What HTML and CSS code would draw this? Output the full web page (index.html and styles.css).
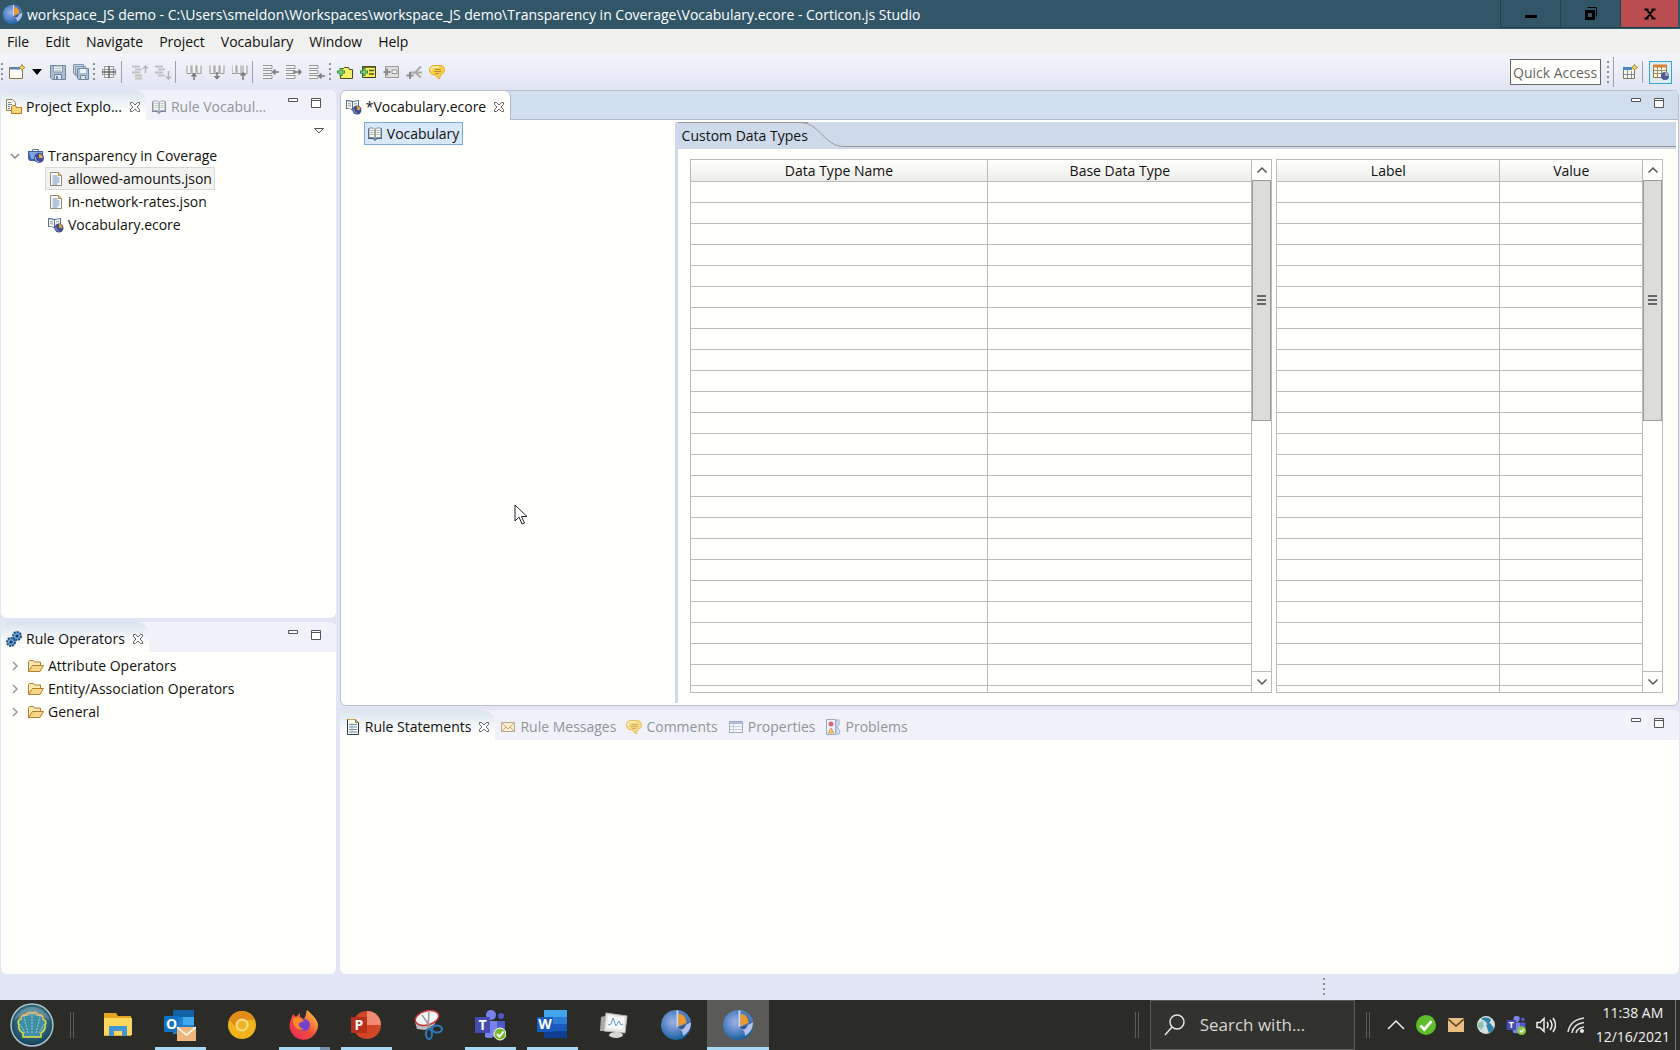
FILE: index.html
```html
<!DOCTYPE html>
<html lang="en">
<head>
  <meta charset="UTF-8">
  <meta name="viewport" content="width=device-width, initial-scale=1.0">
  <title>Corticon.js Studio</title>

  <link rel="stylesheet" href="styles.css">
</head>
<body>
  <!-- icon sprite -->
  <svg class="sprite">
    <defs>
      <radialGradient id="ball" cx="0.4" cy="0.4" r="0.65">
        <stop offset="0" stop-color="#9db4e4"/>
        <stop offset="0.5" stop-color="#5b86c8"/>
        <stop offset="1" stop-color="#0d5c9a"/>
      </radialGradient>
      <radialGradient id="shell-bg" cx="0.5" cy="0.4" r="0.6">
        <stop offset="0" stop-color="#5fa3b0"/>
        <stop offset="1" stop-color="#123e57"/>
      </radialGradient>
      <linearGradient id="fox" x1="0" y1="1" x2="1" y2="0">
        <stop offset="0" stop-color="#e8205c"/>
        <stop offset="0.5" stop-color="#f4513a"/>
        <stop offset="1" stop-color="#ffdb43"/>
      </linearGradient>
    </defs>
    <symbol id="app" viewBox="0 0 32 32">
      <circle cx="16" cy="16" r="15" fill="url(#ball)"/>
      <path d="M17 1v17l2-1V4c5 1 8 4 9 9l3-1C29 5 23 1 17 1z" fill="#4d7dbd"/>
      <path d="M16.500 1l2 1v15l-2 2z" fill="#cfd9f0"/>
      <path d="M18.500 5c5 0 8 4 8 9l-8 3z" fill="#f0982a"/>
      <path d="M16.500 19c6-1 10-3 14.500-6 0 7-3 11-8 14 0-5-2-7-6.500-8z" fill="#b4c2ea"/>
      <path d="M17 18.500l9-3c-1 3-3 5-5 5z" fill="#35588e"/>
    </symbol>
    <symbol id="book" viewBox="0 0 16 16">
      <path d="M1 2.500h2v9.500h4l1 2 1-2h4V2.500h2V13h-5l-2 2-2-2H1z" fill="#3c587f"/>
      <path d="M2 2.500c2-1 4-1 6 1v9.500c-2-2-4-2-6-1zM14 2.500c-2-1-4-1-6 1v9.500c2-2 4-2 6-1z" fill="#fbf8e6" stroke="#76869c"/>
      <path d="M3.500 4.500h3M3.500 6.500h3M3.500 8.500h3M9.500 4.500h3M9.500 6.500h3M9.500 8.500h3" stroke="#a3b0b5" fill="none"/>
    </symbol>
    <symbol id="ecore" viewBox="0 0 16 16">
      <path d="M0 1h2l5 1 6-1v8l-6 3-3-2H0z" fill="#536f98"/>
      <path d="M1 2l5 1v7L1 9zM12 2L7 3v7l5-1z" fill="#f7f5e4"/>
      <path d="M2 4.500l3 .5M2 6.500l3 .5M8 5l3-.5" stroke="#8799a8" fill="none"/>
      <circle cx="11" cy="11" r="4.500" fill="#41508f"/>
      <path d="M11 7c2 0 3 1 3.500 4H11z" fill="#e89a3c"/>
      <path d="M8 10a3 3 0 0 0 3 4" stroke="#8fa2da" fill="none"/>
    </symbol>
    <symbol id="project" viewBox="0 0 16 16">
      <path d="M0 3h15v10H2L0 11z" fill="#3b62ae"/>
      <path d="M1 4h13v7H3z" fill="#7fa3dc"/>
      <path d="M4.500 3V1.500h6V3" fill="none" stroke="#6c7c92"/>
      <circle cx="11" cy="10" r="5" fill="#3c4d93"/>
      <path d="M11 6c2 0 3 1 4 4h-4z" fill="#efa84a"/>
      <path d="M7.500 9a4 4 0 0 0 4 5" stroke="#b7c3e8" fill="none"/>
    </symbol>
    <symbol id="explorer" viewBox="0 0 16 16">
      <path d="M.5.500h6l3 3v8h-9z" fill="#f4f5ee" stroke="#98834f"/>
      <path d="M2 3.500h3M2 5.500h4M2 7.500h2M2 9.500h2" stroke="#6d88ad"/>
      <path d="M5.500 14.500v-7l1-1h3l1 2h5v6z" fill="#f9d876" stroke="#b07a24"/>
    </symbol>
    <symbol id="file" viewBox="0 0 16 16">
      <path d="M2.500 1.500h8l3 3v10h-11z" fill="#fbfcf8" stroke="#8d8b74"/>
      <path d="M10.500 1.500v3h3" fill="#e7c578" stroke="#b69145"/>
      <path d="M4.500 5h5M4.500 7h7M4.500 9h7M4.500 11h7M4.500 13h5" stroke="#6f8fbe"/>
    </symbol>
    <symbol id="statements" viewBox="0 0 16 16">
      <path d="M2.500.500h8l3 3v12h-11z" fill="#fbfcee" stroke="#2f3d4c"/>
      <path d="M10.500.500v3h3" fill="#e0d182" stroke="#94803a"/>
      <path d="M4 5.500h8M4 8h8M4 10.500h8M4 13h8" stroke="#6b8cb4"/>
      <path d="M7 4v10" stroke="#9db3ce"/>
      <path d="M3 .5h7" stroke="#d6a93c"/>
    </symbol>
    <symbol id="folder" viewBox="0 0 16 16">
      <path d="M.5 13.500v-10l1-1h4l1 1.500h6v3" fill="#fbe9b0" stroke="#b47f2f"/>
      <path d="M.5 13.500l4-6h11l-3.500 6z" fill="#f7d687" stroke="#b47f2f"/>
    </symbol>
    <symbol id="gears" viewBox="0 0 16 16">
      <circle cx="5" cy="11" r="4" fill="#6ea3d2" stroke="#1d4f80" stroke-width="2" stroke-dasharray="2 1"/>
      <circle cx="11" cy="5" r="4" fill="#6ea3d2" stroke="#1d4f80" stroke-width="2" stroke-dasharray="2 1"/>
      <circle cx="5" cy="11" r="1.500" fill="#163a60"/>
      <circle cx="11" cy="5" r="1.500" fill="#163a60"/>
    </symbol>
    <symbol id="close" viewBox="0 0 12 12">
      <path d="M1.500 1.500h2L6 4l2.500-2.500h2v2L8 6l2.500 2.500v2h-2L6 8l-2.500 2.500h-2v-2L4 6 1.500 3.500z" fill="#fff" stroke="#666"/>
    </symbol>
    <symbol id="min" viewBox="0 0 12 12">
      <path d="M1.500 1.500h9v3h-9z" fill="#fff" stroke="#555"/>
    </symbol>
    <symbol id="max" viewBox="0 0 12 12">
      <path d="M1.500 1.500h9v9h-9zM1.500 3.500h9" fill="#fff" stroke="#555"/>
    </symbol>
    <symbol id="up" viewBox="0 0 12 12"><path d="M1.500 8.500L6 4l4.500 4.500" fill="none" stroke="#555" stroke-width="1.500"/></symbol>
    <symbol id="down" viewBox="0 0 12 12"><path d="M1.500 3.500L6 8l4.500-4.500" fill="none" stroke="#555" stroke-width="1.500"/></symbol>
    <symbol id="twist-open" viewBox="0 0 10 10"><path d="M1 3l4 4 4-4" fill="none" stroke="#888" stroke-width="1.500"/></symbol>
    <symbol id="twist" viewBox="0 0 10 10"><path d="M3 1l4 4-4 4" fill="none" stroke="#999" stroke-width="1.500"/></symbol>
    <symbol id="mail" viewBox="0 0 16 16">
      <path d="M1.500 3.500h13v9h-13z" fill="#fdeebf" stroke="#a08a66"/>
      <path d="M2 4l6 6 6-6M2 12l4-4M14 12l-4-4" fill="none" stroke="#c08f4c"/>
    </symbol>
    <symbol id="comment" viewBox="0 0 16 16">
      <path d="M5 1.500h6c3 0 4.500 2 4.500 5 0 2-2 3.500-4 4l-1 4.500c-2-1-3-2-4-4-4 0-6-2-6-5s2-4.500 4.500-4.500z" fill="#f8cf45" stroke="#e5ac2b"/>
      <path d="M2 7c0-3 1-4 4-4h4" stroke="#fdf2b2" fill="none" stroke-width="1.500"/>
      <path d="M6 5.500h6M5 7.500h7M6 9.500h4" stroke="#c0892a"/>
    </symbol>
    <symbol id="props" viewBox="0 0 16 16">
      <path d="M1.500 2.500h13v11h-13z" fill="#f6f8fb" stroke="#7b91b5"/>
      <path d="M2 4h12" stroke="#8ea9d3" stroke-width="2"/>
      <path d="M5.500 5v8M2 7.500h12M2 10.500h12" stroke="#b7c2d4"/>
    </symbol>
    <symbol id="problems" viewBox="0 0 16 16">
      <path d="M1.500.500h9v15h-9z" fill="#eef1fa" stroke="#7c88ae"/>
      <path d="M11 1h3v5l-2 2 3 4-1 3h-3z" fill="#ccd6ef" stroke="#7c98c6"/>
      <circle cx="6" cy="5" r="2.500" fill="#c9304c"/>
      <path d="M6 9l3 5H3z" fill="#f2b44a" stroke="#c78324"/>
    </symbol>
    <symbol id="new" viewBox="0 0 16 16">
      <path d="M.5 3.500h13v11H.5z" fill="#fbfcf8" stroke="#8b7440"/>
      <path d="M1 4.500h10" stroke="#4b87c5" stroke-width="2"/>
      <path d="M13 .5l1 2 2 1-2 1-1 2-1-2-2-1 2-1z" fill="#fbe27a" stroke="#a68423"/>
    </symbol>
    <symbol id="save" viewBox="0 0 16 16">
      <path d="M.5 1.500h15v14h-13l-2-2z" fill="#a9bdd4" stroke="#71849c"/>
      <path d="M3.500 2h9v6h-9z" fill="#eef2f6" stroke="#8b9cb0"/>
      <path d="M5 4.500h6M5 6.500h6" stroke="#b8c4d0"/>
      <path d="M4.500 10.500h7v5h-7z" fill="#dfe6ed" stroke="#71849c"/>
      <path d="M6 12h2v3H6z" fill="#71849c"/>
    </symbol>
    <symbol id="save-all" viewBox="0 0 16 16">
      <path d="M.5.500h10v10H2l-1.500-1zM2.500 2.500h10v10H4l-1.500-1z" fill="#c8d4e2" stroke="#8294aa"/>
      <path d="M4.500 4.500h11v11h-10l-1-1z" fill="#a9bdd4" stroke="#71849c"/>
      <path d="M7 5h6v4H7z" fill="#eef2f6"/>
      <path d="M7.500 11.500h5v4h-5z" fill="#dfe6ed" stroke="#71849c"/>
    </symbol>
    <symbol id="grid" viewBox="0 0 16 16">
      <path d="M3.500 2.500h9v11h-9zM1.500 5.500h13v5h-13z" fill="#f4f4f4" stroke="#999"/>
      <path d="M8 2v12M1 8h14" stroke="#666" stroke-width="1.500"/>
    </symbol>
    <symbol id="sort-up" viewBox="0 0 16 16">
      <path d="M0 2.500h8M3 5.500h7M0 8.500h8M3 11.500h7M3 14.500h7" stroke="#c2c2c2" stroke-width="2"/>
      <path d="M13.500 9V2M11 4.500L13.500 2 16 4.500" fill="none" stroke="#b5b5b5" stroke-width="1.500"/>
    </symbol>
    <symbol id="sort-down" viewBox="0 0 16 16">
      <path d="M0 2.500h8M3 5.500h7M0 8.500h8M3 11.500h7" stroke="#c2c2c2" stroke-width="2"/>
      <path d="M13.500 7v8M11 12.500l2.500 2.500 2.500-2.500" fill="none" stroke="#b5b5b5" stroke-width="1.500"/>
    </symbol>
    <symbol id="col-up" viewBox="0 0 16 16">
      <path d="M1 1.500v8h4v-8M6 1.500v8h4v-8M11 1.500v8h4v-8" fill="#f2f2f2" stroke="#999"/>
      <path d="M8 16v-6M5.500 12.500L8 10l2.500 2.500" fill="none" stroke="#777" stroke-width="1.500"/>
    </symbol>
    <symbol id="col-down" viewBox="0 0 16 16">
      <path d="M1 1.500v8h4v-8M6 1.500v8h4v-8M11 1.500v8h4v-8" fill="#f2f2f2" stroke="#999"/>
      <path d="M8 8v7M5.500 12L8 14.500l2.500-2.500" fill="none" stroke="#777" stroke-width="1.500"/>
    </symbol>
    <symbol id="col-add" viewBox="0 0 16 16">
      <path d="M0 1.500v8h4v-8M5 1.500v8h4v-8M11 1.500v8h4v-8" fill="#f2f2f2" stroke="#999"/>
      <path d="M11 16v-7M8.500 11.500L11 9l2.500 2.500" fill="none" stroke="#777" stroke-width="1.500"/>
    </symbol>
    <symbol id="row-left" viewBox="0 0 16 16">
      <path d="M0 1.500h9v3H0M0 6.500h9v3H0M0 11.500h9v3H0" fill="#f2f2f2" stroke="#999"/>
      <path d="M16 8h-6M12.500 5.500L10 8l2.500 2.500" fill="none" stroke="#777" stroke-width="1.500"/>
    </symbol>
    <symbol id="row-right" viewBox="0 0 16 16">
      <path d="M0 1.500h9v3H0M0 6.500h9v3H0M0 11.500h9v3H0" fill="#f2f2f2" stroke="#999"/>
      <path d="M7 8h8M12.500 5.500L15 8l-2.500 2.500" fill="none" stroke="#777" stroke-width="1.500"/>
    </symbol>
    <symbol id="row-add" viewBox="0 0 16 16">
      <path d="M0 1.500h9v3H0M0 6.500h9v3H0M0 11.500h9v3H0" fill="#f2f2f2" stroke="#999"/>
      <path d="M16 12h-6M12.500 9.500L10 12l2.500 2.500" fill="none" stroke="#777" stroke-width="1.500"/>
    </symbol>
    <symbol id="entity-add" viewBox="0 0 16 16">
      <path d="M3.500 4.500h3l1-1h4l1 2h3v9h-12z" fill="#f6ef6a" stroke="#4c4a16"/>
      <path d="M4 4v8M0 8h8" stroke="#2d8a35" stroke-width="3"/>
      <path d="M4 5v6M1 8h6" stroke="#a8e29a"/>
    </symbol>
    <symbol id="attr-add" viewBox="0 0 16 16">
      <path d="M2.500 2.500h13v11h-13z" fill="#f3ec5e" stroke="#3f3d16"/>
      <path d="M3 3h12" stroke="#55521c" stroke-width="1.500"/>
      <path d="M9 6.500h5M9 10h5" stroke="#55521c" stroke-width="1.500"/>
      <path d="M4 4v8M0 8h8" stroke="#2d8a35" stroke-width="3"/>
      <path d="M4 5v6M1 8h6" stroke="#a8e29a"/>
    </symbol>
    <symbol id="attr-off" viewBox="0 0 16 16">
      <path d="M2.500 2.500h13v11h-13z" fill="#dedede" stroke="#999"/>
      <path d="M9 6h5v3.500H9z" fill="#f2f2f2" stroke="#999"/>
      <path d="M4 4.500v7M.5 8h7" stroke="#8c8c8c" stroke-width="2"/>
    </symbol>
    <symbol id="assoc" viewBox="0 0 16 16">
      <path d="M4 8.500h5l6-6M9 8.500l6 5M9 8.500h7" fill="none" stroke="#aaa" stroke-width="2"/>
      <path d="M4 8v7M.5 11.500h7" stroke="#8c8c8c" stroke-width="2"/>
    </symbol>
    <symbol id="open-persp" viewBox="0 0 16 16">
      <path d="M1.500 3.500h11v11h-11z" fill="#f8f7e4" stroke="#777a6c"/>
      <path d="M1 4.500h9" stroke="#4b87c5" stroke-width="3"/>
      <path d="M5.500 5v9M9.500 7v7M2 10.500h10" stroke="#7c93a8"/>
      <path d="M12.500.500l1 2 2 1-2 1-1 2-1-2-2-1 2-1z" fill="#fbe27a" stroke="#a68423"/>
    </symbol>
    <symbol id="persp" viewBox="0 0 16 16">
      <path d="M.5 1.500h13v12H.5z" fill="#fdfbe8" stroke="#8b7750"/>
      <path d="M0 2h14" stroke="#dd8230" stroke-width="3"/>
      <path d="M4.500 3v10M8.500 3v10M1 6.500h12M1 9.500h12" stroke="#9a8f70"/>
      <circle cx="12" cy="12" r="4" fill="#4a5896"/>
      <path d="M12 8c2 0 3 1 4 4h-4z" fill="#a9a3c2"/>
    </symbol>
    <symbol id="check" viewBox="0 0 18 18">
      <circle cx="9" cy="9" r="9" fill="#5fbd2a"/>
      <path d="M4 9.500l3.500 3.500L14 5.500" fill="none" stroke="#fff" stroke-width="2.500"/>
    </symbol>
  </svg>

  <header class="title-bar">
    <svg class="title-icon"><use href="#app"/></svg>
    <h1 class="title-text">workspace_JS demo - C:\Users\smeldon\Workspaces\workspace_JS demo\Transparency in Coverage\Vocabulary.ecore - Corticon.js Studio</h1>
    <div class="window-buttons">
      <button aria-label="Minimize"><svg width="14" height="14"><path d="M1 8h12v3H1z"/></svg></button>
      <button aria-label="Restore"><svg width="14" height="14"><path d="M3.500.500h9v9" fill="none" stroke="#000"/><path d="M2.500 4.500h7v7h-7z" fill="none" stroke="#000" stroke-width="3"/></svg></button>
      <button class="quit" aria-label="Close"><svg width="14" height="14"><path d="M1.500 2.500h4M8.500 2.500h4M1.500 11.500h4M8.500 11.500h4M4 3l6 8M10 3l-6 8" fill="none" stroke="#000" stroke-width="2"/></svg></button>
    </div>
  </header>

  <nav class="menu-bar">
    <button>File</button>
    <button>Edit</button>
    <button>Navigate</button>
    <button>Project</button>
    <button>Vocabulary</button>
    <button>Window</button>
    <button>Help</button>
  </nav>

  <div class="tool-bar">
    <span class="grip"></span>
    <button aria-label="New"><svg><use href="#new"/></svg></button>
    <button class="drop" aria-label="New menu"><svg><path d="M3 5h10l-5 6z"/></svg></button>
    <button aria-label="Save"><svg><use href="#save"/></svg></button>
    <button aria-label="Save all"><svg><use href="#save-all"/></svg></button>
    <span class="grip"></span>
    <button aria-label="Grid"><svg><use href="#grid"/></svg></button>
    <span class="line"></span>
    <button aria-label="Sort up"><svg><use href="#sort-up"/></svg></button>
    <button aria-label="Sort down"><svg><use href="#sort-down"/></svg></button>
    <span class="line"></span>
    <button aria-label="Insert column"><svg><use href="#col-up"/></svg></button>
    <button aria-label="Remove column"><svg><use href="#col-down"/></svg></button>
    <button aria-label="Add column"><svg><use href="#col-add"/></svg></button>
    <span class="line"></span>
    <button aria-label="Insert row"><svg><use href="#row-left"/></svg></button>
    <button aria-label="Remove row"><svg><use href="#row-right"/></svg></button>
    <button aria-label="Add row"><svg><use href="#row-add"/></svg></button>
    <span class="grip"></span>
    <button aria-label="Add entity"><svg><use href="#entity-add"/></svg></button>
    <button aria-label="Add attribute"><svg><use href="#attr-add"/></svg></button>
    <button aria-label="Add custom attribute"><svg><use href="#attr-off"/></svg></button>
    <button aria-label="Add association"><svg><use href="#assoc"/></svg></button>
    <button aria-label="Comment"><svg><use href="#comment"/></svg></button>

    <div class="perspectives">
      <input class="quick" type="text" aria-label="Quick Access" placeholder="Quick Access">
      <span class="grip"></span>
      <span class="line tall"></span>
      <button aria-label="Open perspective"><svg><use href="#open-persp"/></svg></button>
      <span class="line"></span>
      <button class="current" aria-label="Corticon perspective"><svg><use href="#persp"/></svg></button>
    </div>
  </div>

  <main class="workbench">
    <div class="side">
      <section class="view">
        <div class="tabs">
          <div class="tab active">
            <svg class="icon"><use href="#explorer"/></svg>
            <button>Project Explo...</button>
            <button class="close" aria-label="Close view"><svg><use href="#close"/></svg></button>
          </div>
          <div class="tab">
            <svg class="icon"><use href="#book"/></svg>
            <button>Rule Vocabul...</button>
          </div>
          <div class="view-buttons">
            <button aria-label="Minimize view"><svg><use href="#min"/></svg></button>
            <button aria-label="Maximize view"><svg><use href="#max"/></svg></button>
          </div>
        </div>
        <div class="view-menu">
          <button aria-label="View menu"><svg><path d="M1.500 3.500h9L6 8z" fill="#fff" stroke="#555"/></svg></button>
        </div>
        <ul class="tree">
          <li>
            <div class="node">
              <svg class="twist"><use href="#twist-open"/></svg>
              <svg class="icon"><use href="#project"/></svg>
              <span>Transparency in Coverage</span>
            </div>
            <ul class="branch">
              <li class="node leaf selected"><svg class="icon"><use href="#file"/></svg><span>allowed-amounts.json</span></li>
              <li class="node leaf"><svg class="icon"><use href="#file"/></svg><span>in-network-rates.json</span></li>
              <li class="node leaf"><svg class="icon"><use href="#ecore"/></svg><span>Vocabulary.ecore</span></li>
            </ul>
          </li>
        </ul>
      </section>

      <section class="view">
        <div class="tabs">
          <div class="tab active">
            <svg class="icon"><use href="#gears"/></svg>
            <button>Rule Operators</button>
            <button class="close" aria-label="Close view"><svg><use href="#close"/></svg></button>
          </div>
          <div class="view-buttons">
            <button aria-label="Minimize view"><svg><use href="#min"/></svg></button>
            <button aria-label="Maximize view"><svg><use href="#max"/></svg></button>
          </div>
        </div>
        <ul class="tree operators">
          <li class="node"><svg class="twist"><use href="#twist"/></svg><svg class="icon"><use href="#folder"/></svg><span>Attribute Operators</span></li>
          <li class="node"><svg class="twist"><use href="#twist"/></svg><svg class="icon"><use href="#folder"/></svg><span>Entity/Association Operators</span></li>
          <li class="node"><svg class="twist"><use href="#twist"/></svg><svg class="icon"><use href="#folder"/></svg><span>General</span></li>
        </ul>
      </section>
    </div>

    <div class="center">
      <section class="view editor">
        <div class="tabs">
          <div class="tab active">
            <svg class="icon"><use href="#ecore"/></svg>
            <button>*Vocabulary.ecore</button>
            <button class="close" aria-label="Close editor"><svg><use href="#close"/></svg></button>
          </div>
          <div class="view-buttons">
            <button aria-label="Minimize editor"><svg><use href="#min"/></svg></button>
            <button aria-label="Maximize editor"><svg><use href="#max"/></svg></button>
          </div>
        </div>
        <div class="editor-body">
          <div class="outline">
            <div class="node root"><svg class="icon"><use href="#book"/></svg><span>Vocabulary</span></div>
          </div>
          <div class="details">
            <div class="folder-bar">
              <h2>Custom Data Types</h2>
              <svg class="curve"><path d="M0 .5c20 0 24 24 44 24" fill="none" stroke="#9a9a9a"/></svg>
              <span class="folder-rest"></span>
            </div>
            <div class="grids">
              <div class="grid types">
                <div class="grid-rows">
                  <table>
                    <thead>
                      <tr><th>Data Type Name</th><th>Base Data Type</th></tr>
                    </thead>
                    <tbody>
                      <tr><td></td><td></td></tr>
                      <tr><td></td><td></td></tr>
                      <tr><td></td><td></td></tr>
                      <tr><td></td><td></td></tr>
                      <tr><td></td><td></td></tr>
                      <tr><td></td><td></td></tr>
                      <tr><td></td><td></td></tr>
                      <tr><td></td><td></td></tr>
                      <tr><td></td><td></td></tr>
                      <tr><td></td><td></td></tr>
                      <tr><td></td><td></td></tr>
                      <tr><td></td><td></td></tr>
                      <tr><td></td><td></td></tr>
                      <tr><td></td><td></td></tr>
                      <tr><td></td><td></td></tr>
                      <tr><td></td><td></td></tr>
                      <tr><td></td><td></td></tr>
                      <tr><td></td><td></td></tr>
                      <tr><td></td><td></td></tr>
                      <tr><td></td><td></td></tr>
                      <tr><td></td><td></td></tr>
                      <tr><td></td><td></td></tr>
                      <tr><td></td><td></td></tr>
                      <tr><td></td><td></td></tr>
                      <tr><td></td><td></td></tr>
                    </tbody>
                  </table>
                </div>
                <div class="scroll">
                  <button aria-label="Scroll up"><svg><use href="#up"/></svg></button>
                  <div class="track"><div class="thumb"></div></div>
                  <button aria-label="Scroll down"><svg><use href="#down"/></svg></button>
                </div>
              </div>
              <div class="grid labels">
                <div class="grid-rows">
                  <table>
                    <thead>
                      <tr><th>Label</th><th>Value</th></tr>
                    </thead>
                    <tbody>
                      <tr><td></td><td></td></tr>
                      <tr><td></td><td></td></tr>
                      <tr><td></td><td></td></tr>
                      <tr><td></td><td></td></tr>
                      <tr><td></td><td></td></tr>
                      <tr><td></td><td></td></tr>
                      <tr><td></td><td></td></tr>
                      <tr><td></td><td></td></tr>
                      <tr><td></td><td></td></tr>
                      <tr><td></td><td></td></tr>
                      <tr><td></td><td></td></tr>
                      <tr><td></td><td></td></tr>
                      <tr><td></td><td></td></tr>
                      <tr><td></td><td></td></tr>
                      <tr><td></td><td></td></tr>
                      <tr><td></td><td></td></tr>
                      <tr><td></td><td></td></tr>
                      <tr><td></td><td></td></tr>
                      <tr><td></td><td></td></tr>
                      <tr><td></td><td></td></tr>
                      <tr><td></td><td></td></tr>
                      <tr><td></td><td></td></tr>
                      <tr><td></td><td></td></tr>
                      <tr><td></td><td></td></tr>
                      <tr><td></td><td></td></tr>
                    </tbody>
                  </table>
                </div>
                <div class="scroll">
                  <button aria-label="Scroll up"><svg><use href="#up"/></svg></button>
                  <div class="track"><div class="thumb"></div></div>
                  <button aria-label="Scroll down"><svg><use href="#down"/></svg></button>
                </div>
              </div>
            </div>
          </div>
        </div>
      </section>

      <section class="view">
        <div class="tabs">
          <div class="tab active">
            <svg class="icon"><use href="#statements"/></svg>
            <button>Rule Statements</button>
            <button class="close" aria-label="Close view"><svg><use href="#close"/></svg></button>
          </div>
          <div class="tab"><svg class="icon"><use href="#mail"/></svg><button>Rule Messages</button></div>
          <div class="tab"><svg class="icon"><use href="#comment"/></svg><button>Comments</button></div>
          <div class="tab"><svg class="icon"><use href="#props"/></svg><button>Properties</button></div>
          <div class="tab"><svg class="icon"><use href="#problems"/></svg><button>Problems</button></div>
          <div class="view-buttons">
            <button aria-label="Minimize view"><svg><use href="#min"/></svg></button>
            <button aria-label="Maximize view"><svg><use href="#max"/></svg></button>
          </div>
        </div>
      </section>
    </div>
  </main>

  <div class="status-bar"><span class="grip"></span></div>

  <footer class="taskbar">
    <button class="start" aria-label="Start">
      <svg viewBox="0 0 44 44">
        <circle cx="22" cy="22" r="21" fill="url(#shell-bg)" stroke="#a9c4cf" stroke-width="1.500"/>
        <path d="M13 34v-4c-4-2-5-4-4-8-2-3 0-6 2-6 0-3 3-5 5-4 2-3 5-3 6-2 2-1 5-1 6 2 3-1 5 1 5 4 2 1 4 3 2 6 1 4-1 6-4 8v4z" fill="#3e8fa5" stroke="#e3e04a" stroke-width="1.500"/>
        <path d="M22 30V12M18 30l-4-16M26 30l4-16M15 30l-5-9M29 30l5-9" stroke="#9ad0d0" fill="none" stroke-dasharray="2 1"/>
        <path d="M11 16c0-3 3-5 5-4 2-3 5-3 6-2 2-1 5-1 6 2 3-1 5 1 5 4" fill="none" stroke="#e29a45" stroke-width="1.500"/>
        <path d="M4 17A19 19 0 0 1 40 17Q22 8 4 17z" fill="#fff" opacity="0.200"/>
      </svg>
    </button>
    <span class="bars"></span>
    <div class="apps">
      <button aria-label="File Explorer">
        <svg viewBox="0 0 32 32">
          <path d="M2 4h12l2 3h13v20H2z" fill="#e6a31e"/>
          <path d="M2 9h28v17H2z" fill="#fbd75e"/>
          <path d="M7 27V17h18v10h-5v-5h-8v5z" fill="#3f96d3"/>
        </svg>
      </button>
      <button class="running" aria-label="Outlook">
        <svg viewBox="0 0 32 32">
          <path d="M9 1h21v24H9z" fill="#1f7fd0"/>
          <path d="M9 1h21v7H9z" fill="#1262a8"/>
          <path d="M19 8h11v8H19z" fill="#40a9ea"/>
          <path d="M0 7h15v16H0z" fill="#1272c4"/>
          <text x="7.500" y="20" class="logo-letter">O</text>
          <path d="M13 18h19v14H13z" fill="#edb77e"/>
          <path d="M13 18l9.500 8 9.500-8" fill="none" stroke="#fff" stroke-width="1.500"/>
        </svg>
      </button>
      <button aria-label="Chrome Canary">
        <svg viewBox="0 0 32 32">
          <circle cx="16" cy="16" r="14" fill="#f0b41c"/>
          <path d="M3 11a14 14 0 0 1 26 0H16l-5 8z" fill="#e08a18"/>
          <circle cx="16" cy="16" r="6.500" fill="#f8de85"/>
          <circle cx="16" cy="16" r="4.500" fill="#eab52b"/>
        </svg>
      </button>
      <button class="running stacked" aria-label="Firefox">
        <svg viewBox="0 0 32 32">
          <path d="M3 10l2-5 3 3 4-4v4l4 2c2-3 2-6 3-9 3 3 6 5 8 8 3 4 4 8 2 12a14 14 0 0 1-27-1c-1-4 0-7 1-10z" fill="url(#fox)"/>
          <circle cx="16" cy="16" r="6" fill="#7542c9"/>
          <path d="M5 9c4-2 8 0 11 3l-5 2c-1 3 2 6 5 6-6 3-12-3-11-11z" fill="#f98a28"/>
        </svg>
      </button>
      <button class="running" aria-label="PowerPoint">
        <svg viewBox="0 0 32 32">
          <circle cx="17" cy="16" r="14" fill="#d24625"/>
          <path d="M17 2a14 14 0 0 1 14 14H17z" fill="#f08a70"/>
          <path d="M1 8h16v16H1z" fill="#b7301c"/>
          <text x="9" y="21" class="logo-letter">P</text>
        </svg>
      </button>
      <button aria-label="Snipping Tool">
        <svg viewBox="0 0 32 32">
          <path d="M3 13l2 7 8 1 9-5 4-8z" fill="#b9bcc0"/>
          <ellipse cx="15" cy="9" rx="12" ry="7" fill="#f5f5f5" stroke="#c8333d" stroke-width="1.500" transform="rotate(-15 15 9)"/>
          <path d="M10 6l9 13M17 3l-1 17" stroke="#999" stroke-width="1.500"/>
          <ellipse cx="17" cy="25" rx="3" ry="5" fill="none" stroke="#2b7cc0" stroke-width="2"/>
          <ellipse cx="25" cy="20" rx="5" ry="3.500" fill="none" stroke="#2b7cc0" stroke-width="2"/>
        </svg>
      </button>
      <button class="running" aria-label="Teams">
        <svg viewBox="0 0 32 32">
          <circle cx="17" cy="6" r="5" fill="#7b83eb"/>
          <circle cx="27" cy="7" r="3" fill="#5059c9"/>
          <path d="M11 12h12v10a8 8 0 0 1-12 6z" fill="#7b83eb"/>
          <path d="M23 12h8v9a5 5 0 0 1-8 3z" fill="#5059c9"/>
          <path d="M1 8h15v16H1z" fill="#444cb0"/>
          <text x="8.500" y="21" class="logo-letter">T</text>
          <circle cx="26" cy="25" r="6" fill="#74b92a" stroke="#fff"/>
          <path d="M23 25l2.500 2.500 4-5" fill="none" stroke="#fff" stroke-width="2"/>
        </svg>
      </button>
      <button class="running" aria-label="Word">
        <svg viewBox="0 0 32 32">
          <path d="M8 1h23v28H8z" fill="#2b7cd3"/>
          <path d="M8 1h23v7H8z" fill="#41a5ee"/>
          <path d="M8 15h23v7H8z" fill="#185abd"/>
          <path d="M8 22h23v7H8z" fill="#103f91"/>
          <path d="M1 8h16v15H1z" fill="#185abd"/>
          <text x="9" y="20" class="logo-letter">W</text>
        </svg>
      </button>
      <button aria-label="Monitor">
        <svg viewBox="0 0 32 32">
          <path d="M3 8l8-2v16H2z" fill="#a9aaa4"/>
          <path d="M8 4l21 3-2 17-21-2z" fill="#e8e9e6" stroke="#b3b4b0"/>
          <path d="M10 7l16 2-1 11-16-1z" fill="#f9fbfb"/>
          <path d="M10 16l3-1 2-6 3 8 3-5 2 4 2-1" fill="none" stroke="#5b9ccc"/>
          <ellipse cx="18" cy="26" rx="7" ry="3" fill="#d7d8d5"/>
        </svg>
      </button>
      <button aria-label="Corticon Studio"><svg><use href="#app"/></svg></button>
      <button class="running front" aria-label="Corticon.js Studio"><svg><use href="#app"/></svg></button>
    </div>

    <div class="tray">
      <span class="bars"></span>
      <label class="search">
        <svg width="22" height="22"><circle cx="13" cy="8" r="7" fill="none" stroke="#e4e4e2" stroke-width="1.500"/><path d="M8 13l-7 8" stroke="#e4e4e2" stroke-width="1.500"/></svg>
        <input type="text" aria-label="Search" placeholder="Search with...">
      </label>
      <span class="bars"></span>
      <div class="tray-icons">
        <button aria-label="Show hidden icons"><svg viewBox="0 0 20 20"><path d="M2 14l8-8 8 8" fill="none" stroke="#eee" stroke-width="1.500"/></svg></button>
        <button aria-label="Synced"><svg><use href="#check"/></svg></button>
        <button aria-label="Mail"><svg viewBox="0 0 20 20"><path d="M2 3h16v14H2z" fill="#edbd80"/><path d="M2 4l8 7 8-7" fill="none" stroke="#4e3b22" stroke-width="1.500"/></svg></button>
        <button aria-label="Network client"><svg viewBox="0 0 20 20"><circle cx="10" cy="10" r="9" fill="#d8dfe2"/><path d="M5 4c3-2 8-2 10 1l-3 5-3-4zM10 10l4-2 4 5c-1 3-3 5-5 5z" fill="#2c83a8"/><path d="M2 8l5-2 1 5-3 4-3-3z" fill="#8fbfae"/></svg></button>
        <button aria-label="Teams status">
          <svg viewBox="0 0 32 32">
            <circle cx="17" cy="6" r="5" fill="#7b83eb"/>
            <circle cx="27" cy="7" r="3" fill="#5059c9"/>
            <path d="M11 12h12v10a8 8 0 0 1-12 6z" fill="#7b83eb"/>
            <path d="M23 12h8v9a5 5 0 0 1-8 3z" fill="#5059c9"/>
            <path d="M1 8h15v16H1z" fill="#444cb0"/>
            <text x="8.500" y="21" class="logo-letter">T</text>
            <circle cx="25" cy="25" r="7" fill="#8fc744"/>
            <path d="M22 25l2.500 2.500 4-5" fill="none" stroke="#fff" stroke-width="2"/>
          </svg>
        </button>
        <button aria-label="Volume"><svg viewBox="0 0 20 20"><path d="M1 7.500h3l4-4v13l-4-4H1zM11 7q2 3 0 6M14 5q4 5 0 10M17 3q5 7 0 14" fill="none" stroke="#eee" stroke-width="1.500"/></svg></button>
        <button aria-label="Wi-Fi"><svg viewBox="0 0 20 20"><path d="M2 17Q4 5 18 3M6 18Q7 9 18 7.500M10 18Q11 13 18 12" fill="none" stroke="#ddd" stroke-width="1.500"/><circle cx="16" cy="16" r="2" fill="#eee"/></svg></button>
      </div>
      <div class="clock">
        <time>11:38 AM</time>
        <time>12/16/2021</time>
      </div>
    </div>
  </footer>

  <svg class="pointer" width="14" height="21"><path d="M1 1v16l4-4 3 7 2.500-1-3-6.500H13z" fill="#fff" stroke="#222"/></svg>
</body>
</html>
```
FILE: styles.css
```css
* {
  box-sizing: border-box;
}

body {
  margin: 0;
  height: 100vh;
  display: flex;
  flex-direction: column;
  overflow: hidden;
  background: #e1e5f4;
  color: #111;
  font: 14px/22px "Open Sans", "Noto Sans", sans-serif;
}

button {
  display: flex;
  align-items: center;
  justify-content: center;
  margin: 0;
  padding: 0;
  border: 0;
  background: none;
  color: inherit;
  font: inherit;
  white-space: nowrap;
}

input {
  font: inherit;
}

ul {
  margin: 0;
  padding: 0;
  list-style: none;
}

.sprite {
  position: absolute;
  width: 0;
  height: 0;
}

.icon {
  flex: none;
  width: 16px;
  height: 16px;
}

.logo-letter {
  fill: #fff;
  font-size: 14px;
  font-weight: 700;
  text-anchor: middle;
}

/* dotted drag handle */
.grip {
  width: 2px;
  height: 18px;
  margin: 0 2px 0 1px;
  background: repeating-linear-gradient(#8e8e8e 0 2px, transparent 2px 5px);
}

/* title bar */
.title-bar {
  flex: none;
  display: flex;
  align-items: center;
  height: 29px;
  padding: 0 2px;
  background: #315667;
  color: #fff;
}
.title-icon {
  width: 21px;
  height: 21px;
  margin-right: 4px;
}
.title-text {
  margin: 0;
  font-size: 14px;
  font-weight: 400;
  white-space: nowrap;
}
.window-buttons {
  display: flex;
  align-self: flex-start;
  margin-left: auto;
}
.window-buttons button {
  width: 60px;
  height: 28px;
  border: 1px solid #24404c;
  border-width: 0 0 1px 1px;
}
.window-buttons .quit {
  width: 58px;
  background: #b94d50;
}

/* menu */
.menu-bar {
  flex: none;
  display: flex;
  gap: 16px;
  height: 25px;
  padding: 0 7px;
  background: #f0f0ee;
}

/* tool bar */
.tool-bar {
  flex: none;
  display: flex;
  align-items: center;
  height: 36px;
  background: linear-gradient(#f4f5fb, #e1e5f4);
}
.tool-bar button {
  width: 23px;
  height: 23px;
}
.tool-bar .drop {
  width: 18px;
}
.tool-bar svg {
  width: 16px;
  height: 16px;
}
.line {
  width: 1px;
  height: 22px;
  margin: 0 6px 0 1px;
  background: #a0a0a0;
}
.perspectives {
  display: flex;
  align-items: center;
  margin-left: auto;
  padding-right: 8px;
}
.perspectives .grip {
  height: 22px;
  margin: 0 4px 0 6px;
}
.perspectives .tall {
  height: 30px;
  margin: 0 4px 0 0;
}
.perspectives .current {
  border: 1px solid #35a3d4;
  background: #dcedf8;
}
.quick {
  width: 91px;
  height: 26px;
  padding: 0 2px;
  border: 1px solid #666;
  background: #fffffb;
}
.quick::placeholder {
  color: #666;
}

/* workbench */
.workbench {
  flex: 1;
  display: grid;
  grid-template-columns: minmax(0, 1fr) minmax(0, 4fr);
  gap: 4px;
  min-height: 0;
  padding: 0 1px;
}
.side,
.center {
  display: grid;
  gap: 4px;
  min-height: 0;
}
.side {
  grid-template-rows: minmax(0, 3fr) minmax(0, 2fr);
}
.center {
  grid-template-rows: minmax(0, 7fr) minmax(0, 3fr);
}
.view {
  display: flex;
  flex-direction: column;
  min-width: 0;
  overflow: hidden;
  border-radius: 6px;
  background: #fffffb;
}

/* tabs */
.tabs {
  flex: none;
  display: flex;
  height: 30px;
  background: #f1f2f9;
}
.tab {
  display: flex;
  align-items: center;
  gap: 4px;
  padding: 3px 5px 0;
  color: #8f9498;
}
.tab .icon {
  opacity: 0.7;
}
.tab.active {
  border-radius: 6px 12px 0 0;
  background: linear-gradient(#dbe5ef, #fffffb 80%);
  color: #111;
}
.tab.active .icon {
  opacity: 1;
}
.close svg,
.view-buttons svg,
.view-menu svg,
.scroll svg {
  width: 12px;
  height: 12px;
}
.close {
  margin-left: 3px;
}
.view-buttons {
  display: flex;
  align-items: flex-start;
  gap: 11px;
  margin-left: auto;
  padding: 7px 14px 0;
}

/* trees */
.view-menu {
  display: flex;
  justify-content: flex-end;
  height: 24px;
  padding: 0 11px 2px;
}
.node {
  display: flex;
  align-items: center;
  gap: 4px;
  height: 23px;
  padding-left: 9px;
  white-space: nowrap;
}
.twist {
  width: 10px;
  height: 10px;
  margin-right: 4px;
}
.operators {
  padding-top: 2px;
}
.branch {
  display: flex;
  flex-direction: column;
  align-items: flex-start;
  padding-left: 44px;
}
.leaf {
  padding: 0 2px;
  border: 1px solid transparent;
}
.leaf.selected {
  border-color: #d8d8d8;
  background: #f2f2f0;
}

/* editor */
.editor {
  border: 1px solid #bcc0c6;
}
.editor .tabs {
  height: 29px;
  background: #d1deed;
  border-bottom: 1px solid #b0b8ca;
}
.editor .tab.active {
  height: 29px;
  padding-top: 2px;
  border-right: 1px solid #b0b8ca;
  border-radius: 6px 6px 0 0;
  background: #fffffb;
}
.editor .view-buttons {
  padding: 6px 13px 0;
}
.editor-body {
  flex: 1;
  display: grid;
  grid-template-columns: minmax(0, 1fr) minmax(0, 3fr);
  min-height: 0;
  padding: 2px 2px 2px 0;
}
.outline {
  padding-left: 23px;
}
.root {
  width: fit-content;
  padding: 0 3px 0 2px;
  border: 1px solid #7fa9d8;
  background: #d9e8f8;
}
.details {
  display: flex;
  flex-direction: column;
  min-height: 0;
  border-left: 3px solid #cedaea;
}
.folder-bar {
  flex: none;
  display: flex;
  height: 27px;
  padding-bottom: 2px;
  background: #cedaea;
}
.folder-bar h2 {
  margin: 0;
  padding-left: 4px;
  border-top: 1px solid #9a9a9a;
  font-size: 14px;
  font-weight: 400;
  line-height: 26px;
}
.curve {
  width: 44px;
  height: 25px;
  margin-left: -8px;
}
.folder-rest {
  flex: 1;
  border-bottom: 1px solid #9a9a9a;
}

/* data grids */
.grids {
  flex: 1;
  display: flex;
  gap: 4px;
  min-height: 0;
  padding: 10px 13px 10px 12px;
}
.grid {
  display: flex;
  min-width: 0;
  border: 1px solid #b9bbb8;
}
.types {
  flex: 1.51;
}
.labels {
  flex: 1;
}
.grid-rows {
  flex: 1;
  overflow: hidden;
}
.grid table {
  width: 100%;
  table-layout: fixed;
  border-spacing: 0;
}
.grid th,
.grid td {
  padding: 0;
  border: 0 solid #b9bbb8;
  border-width: 0 1px 1px 0;
}
.grid th {
  height: 22px;
  background: linear-gradient(#fffffb, #ededeb);
  font-weight: 400;
  line-height: 21px;
}
.grid td {
  height: 21px;
}
.types th:first-child {
  width: 53%;
}
.labels th:first-child {
  width: 61%;
}
.scroll {
  display: flex;
  flex-direction: column;
  width: 19px;
}
.scroll button {
  height: 20px;
}
.track {
  flex: 1;
  border-bottom: 1px solid #b9bbb8;
}
.thumb {
  display: flex;
  height: 49%;
  border: 1px solid #9a9c9a;
  background: #dcddda;
}
.thumb::before {
  content: '';
  width: 9px;
  height: 10px;
  margin: auto;
  background: repeating-linear-gradient(#666 0 2px, transparent 2px 4px);
}

.status-bar {
  flex: none;
  display: flex;
  align-items: center;
  justify-content: flex-end;
  height: 26px;
  padding-right: 353px;
}

/* task bar */
.taskbar {
  flex: none;
  display: flex;
  align-items: center;
  height: 50px;
  background: #2b2b28;
  color: #f2f2f0;
}
.start {
  margin: 0 16px 0 10px;
}
.start svg {
  width: 44px;
  height: 44px;
}
.bars {
  width: 4px;
  height: 26px;
  border: 1px solid #5c5c5a;
  border-width: 0 1px;
}
.apps {
  display: flex;
  align-self: stretch;
  padding-left: 13px;
}
.apps button {
  position: relative;
  width: 62px;
}
.apps svg {
  width: 32px;
  height: 32px;
}
.running::after {
  content: '';
  position: absolute;
  left: 6px;
  right: 5px;
  bottom: 0;
  height: 3px;
  background: #a6d8f4;
}
.stacked::after {
  background: linear-gradient(90deg, #a6d8f4 80%, #7791ad 80%);
}
.apps .front {
  background: #5a5a58;
}
.front::after {
  left: 0;
  right: 0;
}
.tray {
  display: flex;
  align-items: center;
  align-self: stretch;
  margin-left: auto;
  padding-right: 4px;
}
.search {
  display: flex;
  align-items: center;
  align-self: stretch;
  gap: 14px;
  width: 205px;
  margin: 0 11px;
  padding-left: 13px;
  border: 1px solid #5c5c5a;
  background: #32322f;
}
.search input {
  width: 130px;
  padding: 0;
  border: 0;
  background: none;
  font-size: 17px;
}
.search input::placeholder {
  color: #d6d6d4;
}
.tray-icons {
  display: flex;
  padding: 0 5px 0 11px;
}
.tray-icons button {
  width: 30px;
}
.tray-icons svg {
  width: 20px;
  height: 20px;
}
.clock {
  display: flex;
  flex-direction: column;
  align-items: center;
  gap: 2px;
  align-self: stretch;
  padding: 2px 5px 0 0;
  border-right: 1px solid #777;
}

/* mouse pointer */
.pointer {
  position: absolute;
  left: 514px;
  top: 504px;
}
```
